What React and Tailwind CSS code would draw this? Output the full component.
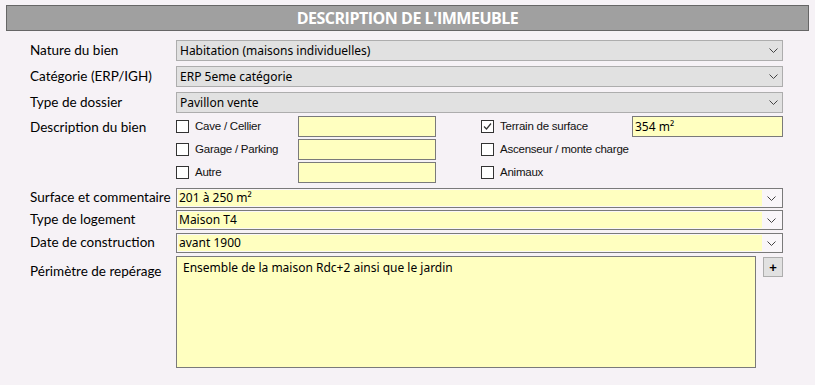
import React from "react";

const Chevron = () => (
  <svg width="9" height="5" viewBox="0 0 9 5" className="block">
    <path d="M0.5 0.5 L4.5 4.5 L8.5 0.5" fill="none" stroke="#444" strokeWidth="1" />
  </svg>
);

const label = "text-[13.5px] text-black leading-none whitespace-nowrap";
const lf = { fontFamily: 'Lato, "Noto Sans", sans-serif' };
const sf = { fontFamily: '"Noto Sans", "Open Sans", sans-serif' };
const cf = { fontFamily: '"Liberation Sans", Arial, sans-serif' };

function GraySelect({ value }) {
  return (
    <div className="flex h-[21px] w-[607px] items-center border border-[#adadad] bg-[#e1e1e1] pl-[3px] pr-[4px]">
      <span className="flex-1 text-[12px] text-black" style={sf}>{value}</span>
      <Chevron />
    </div>
  );
}

function YellowCombo({ value }) {
  return (
    <div className="flex h-[20px] w-[607px] border border-[#7a7a7a] bg-[#f9f6f9] p-px">
      <div className="flex flex-1 items-center bg-[#ffffc0] pl-[1px] text-[12px] text-black" style={sf}>{value}</div>
      <div className="flex w-[19px] items-center justify-center"><Chevron /></div>
    </div>
  );
}

function Check({ checked, text }) {
  return (
    <div className="flex items-center">
      <div className="flex h-[13px] w-[13px] items-center justify-center border border-[#333] bg-white">
        {checked && (
          <svg width="11" height="11" viewBox="0 0 11 11">
            <path d="M2 5.5 L4.5 8 L9 2.5" fill="none" stroke="#333" strokeWidth="1.2" />
          </svg>
        )}
      </div>
      <span className="ml-[6px] text-[11.5px] tracking-[-0.02em] text-[#111]" style={cf}>{text}</span>
    </div>
  );
}

const YInput = ({ value }) => (
  <div className="flex h-[21px] items-center border border-[#7a7a7a] bg-[#ffffc0] pl-[2px] text-[12px] text-black" style={sf}>{value}</div>
);

function Row({ name, children, cls = "", lcls = "" }) {
  return (
    <div className={`flex ${cls}`}>
      <div className={`w-[176px] shrink-0 pl-[30px] ${label} ${lcls}`} style={lf}>{name}</div>
      {children}
    </div>
  );
}

export default function App() {
  return (
    <div className="h-[385px] w-[815px] bg-[#f6f2f6] pt-[5px]">
      <div className="mx-[6px] flex h-[26px] items-center justify-center border border-[#666] bg-[#a0a0a0]">
        <span className="text-[16px] font-bold tracking-[-0.03em] text-white" style={{ fontFamily: '"Open Sans", sans-serif' }}>
          DESCRIPTION DE L'IMMEUBLE
        </span>
      </div>

      <div className="mt-[9px] flex flex-col">
        <Row name="Nature du bien" cls="items-center">
          <GraySelect value="Habitation (maisons individuelles)" />
        </Row>
        <Row name="Catégorie (ERP/IGH)" cls="items-center mt-[5px]">
          <GraySelect value="ERP 5eme catégorie" />
        </Row>
        <Row name="Type de dossier" cls="items-center mt-[5px]">
          <GraySelect value="Pavillon vente" />
        </Row>

        <Row name="Description du bien" cls="mt-[3px]" lcls="pt-[5px]">
          <div className="grid grid-cols-[122px_138px_45px_151px_151px] grid-rows-[21px_21px_21px] gap-y-[2px]">
            <Check text="Cave / Cellier" />
            <YInput />
            <div />
            <Check checked text="Terrain de surface" />
            <YInput value="354 m²" />

            <Check text="Garage / Parking" />
            <YInput />
            <div />
            <Check text="Ascenseur / monte charge" />
            <div />

            <Check text="Autre" />
            <YInput />
            <div />
            <Check text="Animaux" />
            <div />
          </div>
        </Row>

        <Row name="Surface et commentaire" cls="items-center mt-[5px]">
          <YellowCombo value="201 à 250 m²" />
        </Row>
        <Row name="Type de logement" cls="items-center mt-[2px]">
          <YellowCombo value="Maison T4" />
        </Row>
        <Row name="Date de construction" cls="items-center mt-[3px]">
          <YellowCombo value="avant 1900" />
        </Row>

        <Row name="Périmètre de repérage" cls="mt-[3px]" lcls="pt-[9px]">
          <div className="h-[112px] w-[580px] border border-[#7a7a7a] bg-[#ffffc0] px-[6px] pt-[2px] text-[12px] text-black" style={sf}>
            Ensemble de la maison Rdc+2 ainsi que le jardin
          </div>
          <button className="ml-[7px] mt-[1px] flex h-[20px] w-[20px] items-center justify-center border border-[#adadad] bg-[#e1e1e1] text-[13px] font-bold leading-none text-black" style={cf}>
            +
          </button>
        </Row>
      </div>
    </div>
  );
}
